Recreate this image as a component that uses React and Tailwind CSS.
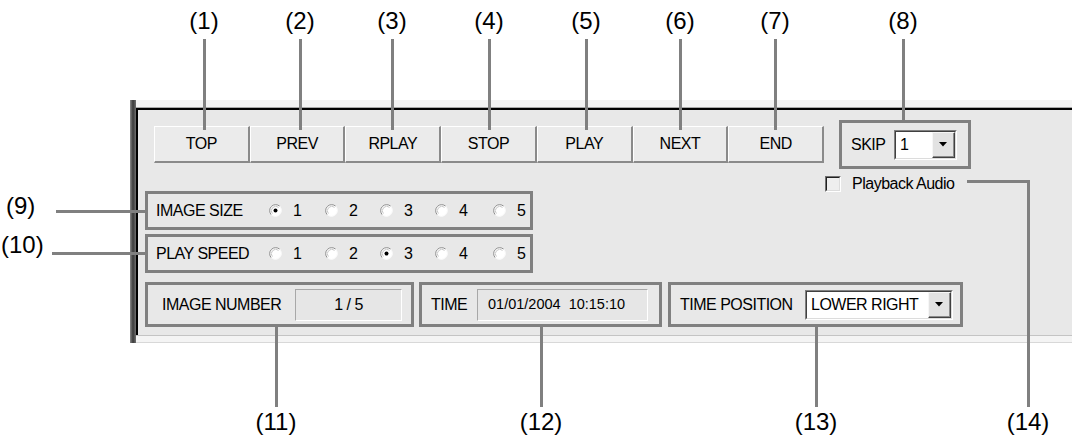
import React from "react";

const BUTTONS = ["TOP", "PREV", "RPLAY", "STOP", "PLAY", "NEXT", "END"]

const TOP_LABELS = [
  { t: "(1)", c: "left-[184px]" },
  { t: "(2)", c: "left-[280px]" },
  { t: "(3)", c: "left-[372px]" },
  { t: "(4)", c: "left-[469px]" },
  { t: "(5)", c: "left-[566px]" },
  { t: "(6)", c: "left-[660px]" },
  { t: "(7)", c: "left-[755px]" },
  { t: "(8)", c: "left-[883px]" },
]

const TOP_LINES = [
  "left-[203px] h-[91px]",
  "left-[299px] h-[91px]",
  "left-[391px] h-[91px]",
  "left-[488px] h-[91px]",
  "left-[585px] h-[91px]",
  "left-[679px] h-[91px]",
  "left-[774px] h-[91px]",
  "left-[902px] h-[81px]",
]

const BOTTOM_LABELS = [
  { t: "(11)", c: "left-[246px]" },
  { t: "(12)", c: "left-[511px]" },
  { t: "(13)", c: "left-[786px]" },
  { t: "(14)", c: "left-[998px]" },
]

const OPTION_W = ["w-[56px]", "w-[55px]", "w-[55px]", "w-[58px]", "w-[30px]"]

function Radio({ on }) {
  return (
    <svg width="13" height="13" viewBox="0 0 13 13" className="shrink-0">
      <circle cx="6.5" cy="6.5" r="6" fill="#fff" />
      <path d="M2.26 10.74 A6 6 0 0 1 10.74 2.26" stroke="#8c8c8c" fill="none" />
      <path d="M10.74 2.26 A6 6 0 0 1 2.26 10.74" stroke="#f8f8f8" fill="none" />
      <path d="M3.4 9.6 A4.4 4.4 0 0 1 9.6 3.4" stroke="#c8c8c8" fill="none" />
      {on && <circle cx="6.5" cy="6.5" r="2" fill="#000" />}
    </svg>
  )
}

function RadioGroup({ label, selected }) {
  return (
    <div className="flex items-center w-[388px] h-[39px] border-[3px] border-[#808080] pl-[8px]">
      <span className="w-[113px] shrink-0">{label}</span>
      {[1, 2, 3, 4, 5].map((n, i) => (
        <div key={n} className={`flex items-center shrink-0 ${OPTION_W[i]}`}>
          <Radio on={n === selected} />
          <span className="ml-[11px]">{n}</span>
        </div>
      ))}
    </div>
  )
}

function DropButton() {
  return (
    <div className="w-[23px] h-full border-t border-l border-[#f6f6f6] border-b border-r border-b-[#404040] border-r-[#404040] bg-[#e2e2e2]">
      <div className="h-full flex items-center justify-center border-b border-r border-[#8a8a8a]">
        <svg width="8" height="5" viewBox="0 0 8 5">
          <polygon points="0,0 8,0 4,4.5" fill="#000" />
        </svg>
      </div>
    </div>
  )
}

function Combo({ value, w }) {
  return (
    <div className={`${w} h-[30px] border-t border-l border-[#808080] border-b border-r border-b-white border-r-white`}>
      <div className="h-full flex border-t border-l border-[#404040] border-b border-r border-b-[#dcdcdc] border-r-[#dcdcdc] bg-white">
        <span className="flex-1 flex items-center pl-[4px] leading-none">{value}</span>
        <DropButton />
      </div>
    </div>
  )
}

function Field({ w, children, className }) {
  return (
    <div className={`${w} h-[32px] flex items-center border-t border-l border-[#a8a8a8] border-b border-r border-b-white border-r-white bg-[#e6e6e6] ${className}`}>
      {children}
    </div>
  )
}

export default function App() {
  return (
    <div className="relative w-[1072px] h-[438px] bg-white overflow-hidden text-black font-['Liberation_Sans',Arial,sans-serif] text-[16px] tracking-[-0.5px]">
      <div className="pt-[100px] pl-[130px]">
        <div className="flex h-[243px]">
          <div className="w-[6px] bg-linear-to-r from-[#8a8a8a] via-[#3a3a3a] to-[#707070]" />
          <div className="flex-1 flex flex-col">
            <div className="h-[8px] bg-[#f3f3f3] border-b border-[#a8a8a8]" />
            <div className="flex-1 bg-[#e8e8e8] border-t-2 border-l-2 border-black pl-[7px] pt-[10px]">
              {/* buttons + skip */}
              <div className="flex items-start h-[71px] pl-[9px]">
                <div className="grid grid-cols-7 w-[670px] h-[37px] mt-[6px]">
                  {BUTTONS.map(b => (
                    <div key={b} className="flex items-center justify-center bg-[#ebebeb] border-t border-l border-white border-b-2 border-r-2 border-b-[#8a8a8a] border-r-[#8a8a8a]">
                      {b}
                    </div>
                  ))}
                </div>
                <div className="flex flex-col ml-[15px]">
                  <div className="flex items-center w-[132px] h-[49px] border-[3px] border-[#808080] pl-[9px]">
                    <span className="w-[43px] shrink-0">SKIP</span>
                    <Combo value="1" w="w-[63px]" />
                  </div>
                  <div className="flex items-center h-[16px] mt-[7px] -ml-[14px]">
                    <div className="w-[16px] h-[16px] border-t border-l border-[#707070] border-b border-r border-b-white border-r-white">
                      <div className="h-full border-t border-l border-[#202020] border-b border-r border-b-[#dcdcdc] border-r-[#dcdcdc] bg-[#eeeeee]" />
                    </div>
                    <span className="ml-[11px] whitespace-nowrap">Playback Audio</span>
                  </div>
                </div>
              </div>

              <RadioGroup label="IMAGE SIZE" selected={1} />
              <div className="mt-[4px]">
                <RadioGroup label="PLAY SPEED" selected={3} />
              </div>

              {/* bottom row */}
              <div className="flex mt-[9px]">
                <div className="flex items-center w-[269px] h-[45px] border-[3px] border-[#808080] pl-[14px]">
                  <span className="w-[133px] shrink-0">IMAGE NUMBER</span>
                  <Field w="w-[107px]" className="justify-center">1 / 5</Field>
                </div>
                <div className="flex items-center w-[243px] h-[45px] ml-[5px] border-[3px] border-[#808080] pl-[9px]">
                  <span className="w-[46px] shrink-0">TIME</span>
                  <Field w="w-[171px]" className="pl-[10px] text-[14.5px] tracking-normal whitespace-pre">01/01/2004  10:15:10</Field>
                </div>
                <div className="flex items-center w-[295px] h-[45px] ml-[6px] border-[3px] border-[#808080] pl-[9px]">
                  <span className="w-[125px] shrink-0">TIME POSITION</span>
                  <Combo value="LOWER RIGHT" w="w-[148px]" />
                </div>
              </div>
            </div>
            <div className="h-[8px] bg-[#f4f4f4] border-t border-[#c4c4c4] border-b border-b-[#d8d8d8]" />
          </div>
        </div>
      </div>

      {/* callouts */}
      {TOP_LABELS.map(l => (
        <div key={l.t} className={`absolute top-[9px] w-[40px] text-center text-[24px] tracking-normal leading-none ${l.c}`}>{l.t}</div>
      ))}
      {TOP_LINES.map(c => (
        <div key={c} className={`absolute top-[39px] w-[3px] bg-[#808080] ${c}`} />
      ))}

      <div className="absolute left-[6px] top-[194px] text-[24px] tracking-normal leading-none">(9)</div>
      <div className="absolute left-[56px] top-[210px] w-[89px] h-[3px] bg-[#808080]" />
      <div className="absolute left-[1px] top-[233px] text-[24px] tracking-normal leading-none">(10)</div>
      <div className="absolute left-[52px] top-[252px] w-[93px] h-[3px] bg-[#808080]" />

      <div className="absolute left-[275px] top-[327px] w-[3px] h-[80px] bg-[#808080]" />
      <div className="absolute left-[540px] top-[327px] w-[3px] h-[80px] bg-[#808080]" />
      <div className="absolute left-[815px] top-[327px] w-[3px] h-[80px] bg-[#808080]" />
      <div className="absolute left-[967px] top-[180px] w-[63px] h-[3px] bg-[#808080]" />
      <div className="absolute left-[1027px] top-[180px] w-[3px] h-[227px] bg-[#808080]" />

      {BOTTOM_LABELS.map(l => (
        <div key={l.t} className={`absolute top-[410px] w-[60px] text-center text-[24px] tracking-normal leading-none ${l.c}`}>{l.t}</div>
      ))}
    </div>
  )
}
